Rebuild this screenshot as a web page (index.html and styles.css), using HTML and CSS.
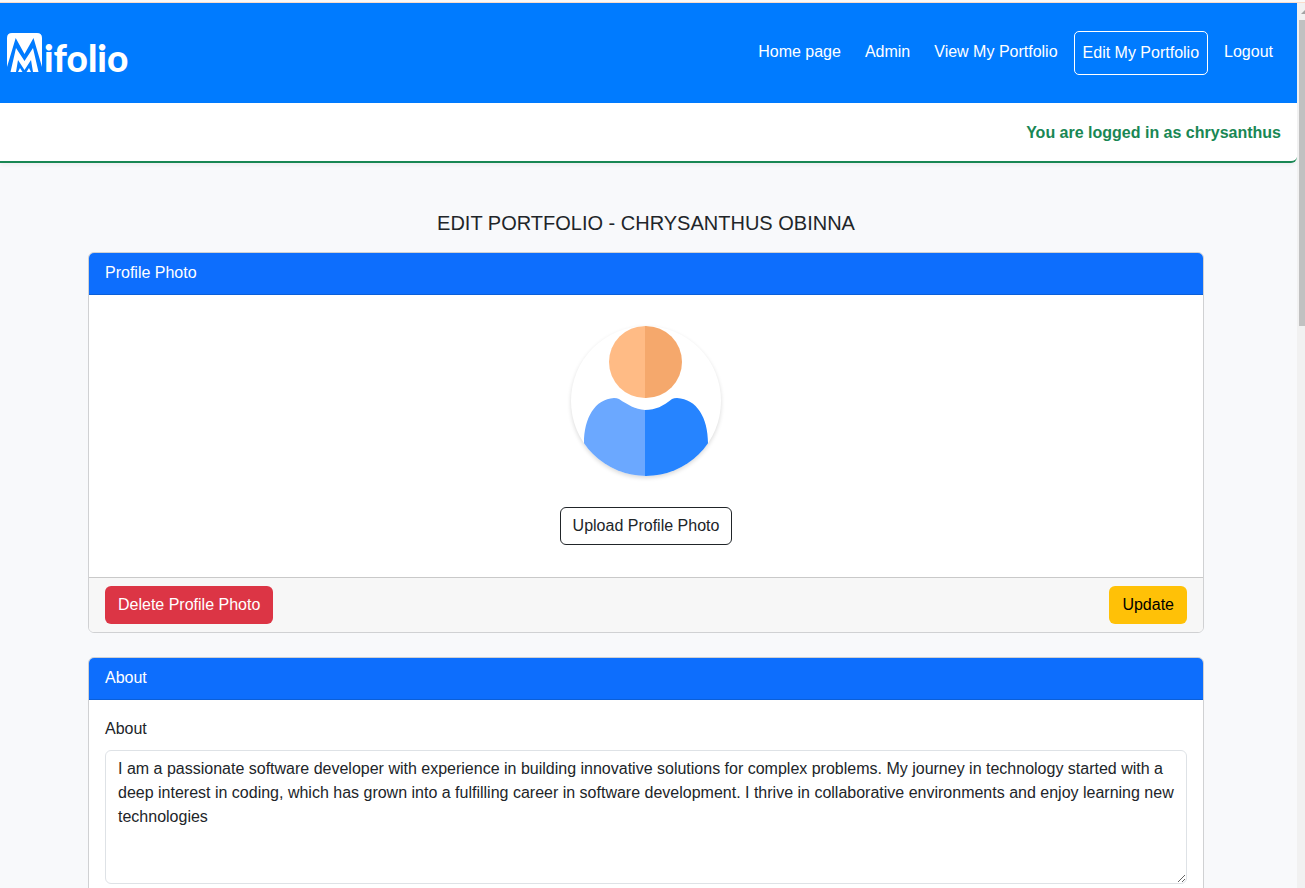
FILE: index.html
```html
<!DOCTYPE html>
<html lang="en">
<head>
<meta charset="utf-8">
<meta name="viewport" content="width=device-width, initial-scale=1">
<title>Mifolio - Edit Portfolio</title>
<link rel="stylesheet" href="styles.css">
</head>
<body>
<div class="window">
  <div class="page">
    <header class="navbar">
      <a class="brand" href="#" aria-label="Mifolio">
        <svg class="brand-mark" viewBox="0 0 36 40" width="36" height="40" aria-hidden="true">
          <path fill="#fff" d="M0 34V5Q0 0 5 0H30Q35 0 35 5V34L26.500 5L17.500 21L8.700 5Z"/>
          <path fill="#fff" d="M3.500 39L9 15L17.500 28L26 15L31.500 39H26L24 27L17.500 37L11 27L9 39Z"/>
          <path fill="#fff" d="M11 39L13 35L15.500 39ZM19.500 39L22 35L24 39Z"/>
        </svg>
        <span class="brand-name">ifolio</span>
      </a>
      <nav class="nav">
        <a class="nav-link" href="#">Home page</a>
        <a class="nav-link" href="#">Admin</a>
        <a class="nav-link" href="#">View My Portfolio</a>
        <a class="nav-link nav-link-active" href="#">Edit My Portfolio</a>
        <a class="nav-link" href="#">Logout</a>
      </nav>
    </header>
    <div class="status">You are logged in as chrysanthus</div>
    <main class="content">
      <h1 class="title">EDIT PORTFOLIO - CHRYSANTHUS OBINNA</h1>
      <section class="card">
        <h2 class="card-header">Profile Photo</h2>
        <div class="photo-body">
          <svg class="avatar" viewBox="0 0 150 150" width="150" height="150" role="img" aria-label="Profile photo">
            <path fill="#ffbb85" d="M74 0A36 36 0 0 0 74 72Z"/>
            <path fill="#f5a86c" d="M74 0H75A36 36 0 0 1 75 72H74Z"/>
            <path fill="#6ba8ff" d="M74 84C64 83 57 79 48 73Q46 72 43 72C24 73 13 92 13 117L13 150H74Z"/>
            <path fill="#2684ff" d="M74 84C85 84 92 80 101 73Q103 72 106 72C126 73 137 92 137 117L137 150H74Z"/>
          </svg>
          <button class="btn btn-outline" type="button">Upload Profile Photo</button>
        </div>
        <div class="card-footer">
          <button class="btn btn-danger" type="button">Delete Profile Photo</button>
          <button class="btn btn-warning" type="button">Update</button>
        </div>
      </section>
      <section class="card">
        <h2 class="card-header">About</h2>
        <div class="form-body">
          <label class="label" for="about">About</label>
          <textarea class="textarea" id="about" rows="5">I am a passionate software developer with experience in building innovative solutions for complex problems. My journey in technology started with a deep interest in coding, which has grown into a fulfilling career in software development. I thrive in collaborative environments and enjoy learning new technologies</textarea>
        </div>
      </section>
    </main>
  </div>
  <div class="scrollbar" aria-hidden="true">
    <svg class="scroll-arrow" viewBox="0 0 6 17" width="6" height="17"><path fill="#a3a3a3" d="M2 11L6 7V11Z"/></svg>
    <div class="scroll-thumb"></div>
  </div>
</div>
</body>
</html>
```
FILE: styles.css
```css
* { box-sizing: border-box; }

body {
  margin: 0;
  overflow: hidden;
  font-family: "Liberation Sans", Arial, sans-serif;
  font-size: 16px;
  line-height: 26px;
  color: #212529;
  background: #f8f9fa;
}

.window {
  display: flex;
  flex-wrap: wrap;
  height: 100vh;
  padding-top: 3px;
  background: linear-gradient(#f9f9f9 2px, #fadccb 2px, #fadccb 3px, #f8f9fb 3px);
}

.page {
  flex: 1;
  min-width: 0;
  height: 100%;
  overflow: hidden;
  background: #f8f9fb;
}

.navbar {
  display: flex;
  align-items: center;
  justify-content: space-between;
  min-height: 100px;
  padding: 0 16px 0 7px;
  background: #007bff;
}

.brand {
  display: flex;
  align-items: flex-end;
  gap: 1px;
  color: #fff;
  text-decoration: none;
}

.brand-name {
  font-family: Lato, sans-serif;
  font-size: 37px;
  font-weight: 900;
  line-height: 30px;
}

.nav {
  display: flex;
  align-items: flex-start;
  gap: 8px;
}

.nav-link {
  padding: 8px;
  color: #fff;
  text-decoration: none;
}

.nav-link-active {
  border: 1px solid #fff;
  border-radius: 5px;
}

.status {
  padding: 17px 16px 15px;
  font-weight: bold;
  text-align: right;
  color: #198754;
  background: #fff;
  border-bottom: 2px solid #198754;
  border-radius: 0 0 6px 0;
  box-shadow: 0 2px 4px rgba(0, 0, 0, 0.05);
}

.content {
  max-width: 1292px;
  padding: 48px 88px 24px;
}

.title {
  margin: 0 0 17px;
  font-size: 20px;
  font-weight: normal;
  line-height: 24px;
  text-align: center;
}

.card {
  margin-bottom: 24px;
  overflow: hidden;
  background: #fff;
  border: 1px solid #d0d1d3;
  border-radius: 6px;
}

.card-header {
  margin: 0;
  padding: 7px 16px 9px;
  font-size: 16px;
  font-weight: normal;
  line-height: 25px;
  color: #fff;
  background: #0d6efd;
  border-bottom: 1px solid #0b5fd8;
}

.photo-body {
  display: flex;
  flex-direction: column;
  align-items: center;
  gap: 31px;
  padding: 31px 16px 32px;
}

.avatar {
  border-radius: 50%;
  box-shadow: 0 2px 4px rgba(0, 0, 0, 0.15);
}

.card-footer {
  display: flex;
  justify-content: space-between;
  padding: 8px 16px;
  background: #f7f7f7;
  border-top: 1px solid #c9c9c9;
}

.btn {
  padding: 6px 12px;
  font: inherit;
  line-height: 24px;
  border: 1px solid transparent;
  border-radius: 6px;
}

.btn-outline {
  color: #212529;
  background: #fff;
  border-color: #212529;
}

.btn-danger {
  color: #fff;
  background: #dc3545;
}

.btn-warning {
  color: #000;
  background: #ffc107;
}

.form-body {
  padding: 16px;
}

.label {
  display: block;
  margin-bottom: 8px;
}

.textarea {
  display: block;
  width: 100%;
  padding: 6px 12px;
  font: inherit;
  line-height: 24px;
  color: #212529;
  background: #fff;
  border: 1px solid #dee2e6;
  border-radius: 6px;
  resize: vertical;
}

.scrollbar {
  width: 8px;
  height: 100%;
  padding-left: 2px;
  background: #f1f1f1;
}

.scroll-arrow {
  display: block;
}

.scroll-thumb {
  height: 306px;
  background: #c1c1c1;
}
```
